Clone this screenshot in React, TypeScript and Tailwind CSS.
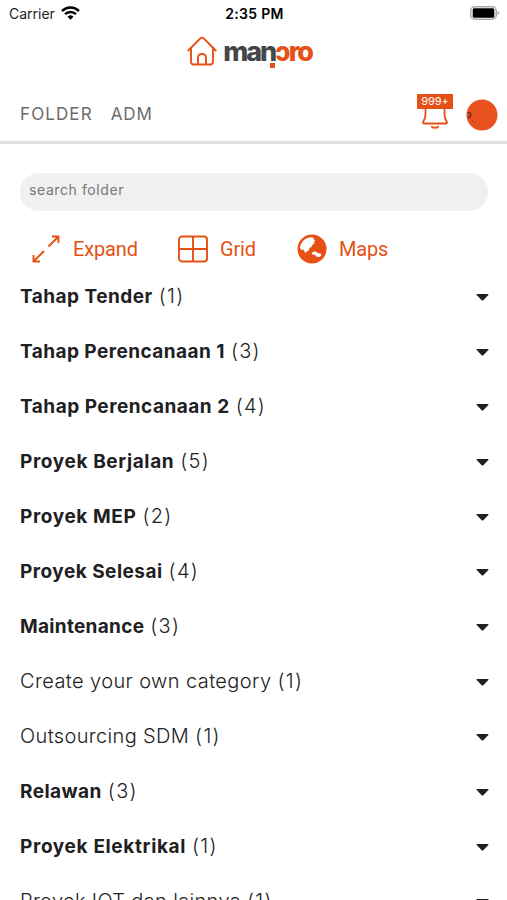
type Folder = { name: string; count: number; bold: boolean; tracking: string };

const folders: Folder[] = [
  { name: "Tahap Tender", count: 1, bold: true, tracking: "tracking-[0.47px]" },
  { name: "Tahap Perencanaan 1", count: 3, bold: true, tracking: "tracking-[0.45px]" },
  { name: "Tahap Perencanaan 2", count: 4, bold: true, tracking: "tracking-[0.5px]" },
  { name: "Proyek Berjalan", count: 5, bold: true, tracking: "tracking-[0.62px]" },
  { name: "Proyek MEP", count: 2, bold: true, tracking: "tracking-[0.6px]" },
  { name: "Proyek Selesai", count: 4, bold: true, tracking: "tracking-[0.48px]" },
  { name: "Maintenance", count: 3, bold: true, tracking: "tracking-[0.3px]" },
  { name: "Create your own category", count: 1, bold: false, tracking: "tracking-[0.4px]" },
  { name: "Outsourcing SDM", count: 1, bold: false, tracking: "tracking-[0.35px]" },
  { name: "Relawan", count: 3, bold: true, tracking: "tracking-[0.45px]" },
  { name: "Proyek Elektrikal", count: 1, bold: true, tracking: "tracking-[0.65px]" },
  { name: "Proyek IOT dan lainnya", count: 1, bold: false, tracking: "tracking-[0.35px]" },
];

function StatusBar() {
  return (
    <div className="grid h-7 shrink-0 grid-cols-3 items-center pr-[7px] pb-[2px] pl-[9px] text-[14px] text-black">
      <div className="flex items-center gap-[6px]">
        <span className="text-[#222]">Carrier</span>
        <svg width="19" height="14" viewBox="0 0 19 14" fill="none" stroke="black" strokeWidth="2.5">
          <path d="M1 5a12.2 12.2 0 0 1 17 0" />
          <path d="M4 8.200a8 8 0 0 1 11 0" />
          <path d="M9.500 13.800 6.500 10.800a4.300 4.300 0 0 1 6 0Z" fill="black" stroke="none" />
        </svg>
      </div>
      <span className="text-center font-semibold tracking-[0.3px]">2:35 PM</span>
      <svg className="justify-self-end" width="30" height="14" viewBox="0 0 30 14">
        <rect x="0.8" y="0.8" width="25.4" height="12.4" rx="3.8" fill="white" stroke="#aaa" strokeWidth="1.5" />
        <rect x="2.7" y="2.3" width="21.6" height="9.4" rx="1.5" fill="black" />
        <path d="M27.5 4.8c2.2.8 2.2 3.6 0 4.4z" fill="#aaa" />
      </svg>
    </div>
  );
}

function Logo() {
  return (
    <div className="flex h-[46px] shrink-0 items-center justify-center gap-[6px] pr-[8px]">
      <svg width="30" height="30" viewBox="0 0 30 30" fill="none" stroke="#e65014" strokeWidth="1.9" strokeLinecap="round" strokeLinejoin="round">
        <path d="M4 12.500V26a2.500 2.500 0 0 0 2.500 2.500h17A2.500 2.500 0 0 0 26 26V12.500M1.300 14.500 13.300 2.300a2.400 2.400 0 0 1 3.400 0L28.700 14.500" />
        <path d="M11 28v-6.500a3.500 3.500 0 0 1 3.500-3.500h1a3.500 3.500 0 0 1 3.500 3.500V28" />
      </svg>
      <div className="relative flex text-[27px] leading-none font-extrabold tracking-[-2.1px]">
        <span className="text-[#43474a]">man</span>
        <span className="text-[#e65014]">ɔro</span>
        <span className="absolute top-[25px] left-[47px] size-[5px] bg-[#e65014]" />
      </div>
    </div>
  );
}

function Tabs() {
  return (
    <div className="flex h-[70px] shrink-0 items-center border-b-[3px] border-[#e0e0e0] pr-[9px] pl-5">
      <nav className="flex gap-[18px] pt-[14px] text-[17px] text-[#6b6b6b]">
        <span className="tracking-[1.1px]">FOLDER</span>
        <span className="tracking-[0.9px]">ADM</span>
      </nav>
      <div className="ml-auto flex items-start gap-[13px] pt-[10px]">
        <div className="flex w-9 flex-col items-center">
          <span className="h-[15px] w-9 bg-[#e65014] text-center text-[11px] leading-[15px] text-white">999+</span>
          <svg width="28" height="21" viewBox="0 0 28 21" fill="none" stroke="#e65014" strokeWidth="1.8" strokeLinejoin="round">
            <path d="M4.500 0v5c0 3.500-.5 5.500-2.500 8v.5q0 1 1 1h22q1 0 1-1V13c-2-2.500-2.500-4.500-2.500-8V0" />
            <path d="M10.500 17c1 2.800 2.500 1.500 3.500 1.500s2.500 1.300 3.500-1.500" />
          </svg>
        </div>
        <svg className="mt-[5px]" width="32" height="32" viewBox="0 0 32 32">
          <circle cx="16" cy="16" r="15.500" fill="#e8521f" />
          <path d="M1.500 14c3-1 4 1 3 3.500l-2.500 1.500M2 16.500h1.500M6.500 22h1M9 23.500h.500" fill="none" stroke="#503030" strokeWidth="1.200" />
        </svg>
      </div>
    </div>
  );
}

function Actions() {
  return (
    <div className="flex h-[58px] shrink-0 items-center pt-[17px] pl-8 font-[Roboto,sans-serif] text-[20px] tracking-[-0.15px] text-[#e65014]">
      <div className="flex w-[146px] items-center gap-[13px]">
        <svg width="28" height="28" viewBox="0 0 28 28" fill="none" stroke="currentColor" strokeWidth="1.9">
          <path d="M16.500 11.500 26.500 1.500M20 1.500h6.500V8M12 16 1.500 26.500M1.500 20v6.500H8" />
        </svg>
        <span>Expand</span>
      </div>
      <div className="flex w-[119px] items-center gap-[12px]">
        <svg width="30" height="28" viewBox="0 0 30 28" fill="none" stroke="currentColor" strokeWidth="1.9">
          <rect x="1" y="1.500" width="28" height="25" rx="3" />
          <path d="M15 1.500v25M1 14h28" />
        </svg>
        <span>Grid</span>
      </div>
      <div className="flex items-center gap-[12px]">
        <svg width="30" height="30" viewBox="0 0 30 30">
          <circle cx="15" cy="15" r="14.500" fill="currentColor" />
          <path d="M2.800 14C3.500 8 8.500 3.800 13.500 3.200l3.500.8-.5 1.500 1.500.5-1 2 .8 1-2 1.500-1.500 2.500-2 1-.3 2.500-2 .5-.5 1.500-2-.3-.5-2.500-2.500.3z" fill="white" />
          <path d="m14.500 20 1.500-2.200 3-.3 1.500 1.500 3 .5 1 2-2 1.500-3-.3-1-1.500z" fill="white" />
        </svg>
        <span>Maps</span>
      </div>
    </div>
  );
}

function FolderRow({ folder }: { folder: Folder }) {
  return (
    <li className="flex h-[55px] shrink-0 items-center justify-between pt-px pr-[18px] pl-5 text-[19px]">
      <div className="flex items-baseline gap-[6px] pb-[2px] whitespace-nowrap">
        <span className={`${folder.tracking} ${folder.bold ? "font-bold text-[#1e2022]" : "text-[20px] font-light text-[#222]"}`}>
          {folder.name}
        </span>
        <span className="text-[20px] font-light tracking-[1.3px] text-[#222]">({folder.count})</span>
      </div>
      <svg width="13" height="7" viewBox="0 0 13 7">
        <path d="M1 0h11q1 0 .3.900L7.300 6.200q-.8.800-1.600 0L.7.900Q0 0 1 0" fill="#1e2022" />
      </svg>
    </li>
  );
}

export default function App() {
  return (
    <main className="flex h-[900px] w-[507px] flex-col overflow-hidden bg-white font-[Inter,sans-serif]">
      <StatusBar />
      <Logo />
      <Tabs />
      <div className="shrink-0 px-5 pt-[29px]">
        <div className="h-[38px] w-[468px] rounded-full bg-[#f0f0f0] px-[9px] text-[14px] leading-[34px] tracking-[0.6px] text-[#777]">
          search folder
        </div>
      </div>
      <Actions />
      <ul className="flex flex-col">
        {folders.map((folder) => (
          <FolderRow key={folder.name} folder={folder} />
        ))}
      </ul>
    </main>
  );
}
